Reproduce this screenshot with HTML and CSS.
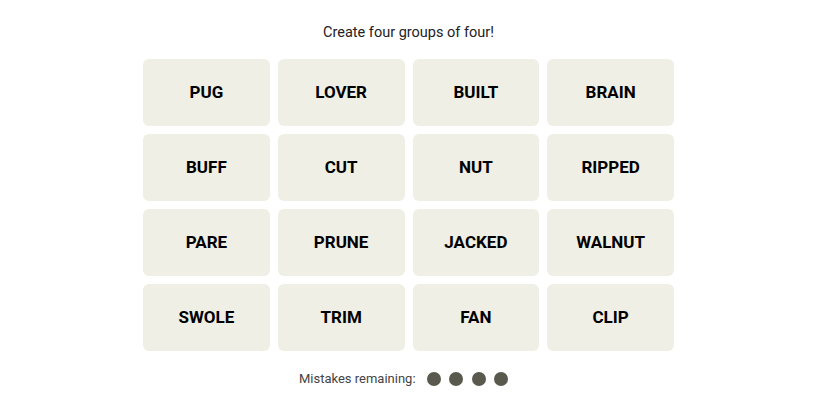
FILE: index.html
```html
<!DOCTYPE html>
<html>
<head>
<meta charset="utf-8">
<link rel="stylesheet" href="styles.css">
</head>
<body>
<main class="page">
  <p class="prompt">Create four groups of four!</p>
  <div class="board">
    <div class="tile">PUG</div>
    <div class="tile">LOVER</div>
    <div class="tile">BUILT</div>
    <div class="tile">BRAIN</div>
    <div class="tile">BUFF</div>
    <div class="tile">CUT</div>
    <div class="tile">NUT</div>
    <div class="tile">RIPPED</div>
    <div class="tile">PARE</div>
    <div class="tile">PRUNE</div>
    <div class="tile">JACKED</div>
    <div class="tile">WALNUT</div>
    <div class="tile">SWOLE</div>
    <div class="tile">TRIM</div>
    <div class="tile">FAN</div>
    <div class="tile">CLIP</div>
  </div>
  <div class="mistakes">
    <span class="mistakes-label">Mistakes remaining:</span>
    <span class="dots">
      <span class="dot"></span><span class="dot"></span><span class="dot"></span><span class="dot"></span>
    </span>
  </div>
</main>
</body>
</html>
```
FILE: styles.css
```css
html, body {
  margin: 0;
  padding: 0;
  background: #ffffff;
}
.page {
  width: 817px;
  display: flex;
  flex-direction: column;
  align-items: center;
  font-family: Roboto, "Liberation Sans", sans-serif;
}
.prompt {
  margin: 23px 0 0 0;
  font-size: 14.5px;
  line-height: 20px;
  color: #222;
}
.board {
  margin-top: 16px;
  display: grid;
  grid-template-columns: repeat(4, 126.75px);
  grid-auto-rows: 67px;
  gap: 8px;
}
.tile {
  background: #efefe6;
  border-radius: 6px;
  display: flex;
  align-items: center;
  justify-content: center;
  padding-bottom: 2px;
  box-sizing: border-box;
  font-weight: 700;
  font-size: 17px;
  color: #000;
}
.mistakes {
  margin-top: 20px;
  margin-right: 10px;
  display: flex;
  align-items: center;
  gap: 11px;
}
.mistakes-label {
  font-size: 13px;
  line-height: 16px;
  color: #444;
}
.dots {
  display: flex;
  gap: 8.5px;
}
.dot {
  width: 14px;
  height: 14px;
  border-radius: 50%;
  background: #5a594e;
}
```
